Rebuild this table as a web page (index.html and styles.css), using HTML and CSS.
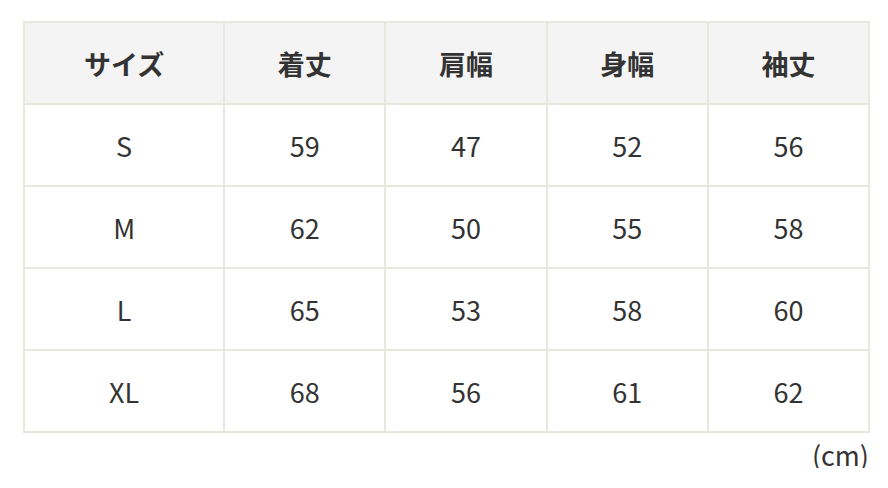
FILE: index.html
```html
<!DOCTYPE html>
<html lang="ja">
<head>
<meta charset="utf-8">
<link rel="stylesheet" href="styles.css">
</head>
<body>
<div class="wrap">
<table class="size-table">
<colgroup>
<col class="c-first"><col class="c"><col class="c"><col class="c"><col class="c">
</colgroup>
<thead>
<tr><th>サイズ</th><th>着丈</th><th>肩幅</th><th>身幅</th><th>袖丈</th></tr>
</thead>
<tbody>
<tr><td>S</td><td>59</td><td>47</td><td>52</td><td>56</td></tr>
<tr><td>M</td><td>62</td><td>50</td><td>55</td><td>58</td></tr>
<tr><td>L</td><td>65</td><td>53</td><td>58</td><td>60</td></tr>
<tr><td>XL</td><td>68</td><td>56</td><td>61</td><td>62</td></tr>
</tbody>
</table>
<div class="unit">(cm)</div>
</div>
</body>
</html>
```
FILE: styles.css
```css
html, body { margin: 0; padding: 0; background: #fff; }
body {
  font-family: "Noto Sans CJK JP", "Noto Sans", sans-serif;
  color: #333;
}
.wrap {
  padding: 21px 18px 0 23px;
  width: 847px;
}
.size-table {
  width: 847px;
  border-collapse: collapse;
  table-layout: fixed;
  border: 2px solid #e8e8e1;
}
.c-first { width: 200px; }
.c { width: 161px; }
.size-table th, .size-table td {
  border: 2px solid #e8e8e1;
  height: 80px;
  padding: 0;
  text-align: center;
  vertical-align: middle;
  font-size: 27px;
  line-height: 1;
}
.size-table th {
  background: #f4f4f4;
  font-weight: 700;
}
.size-table td { font-weight: 400; }
.unit {
  text-align: right;
  font-size: 27px;
  line-height: 1;
  margin-top: 8px;
  padding-right: 1px;
}
```
